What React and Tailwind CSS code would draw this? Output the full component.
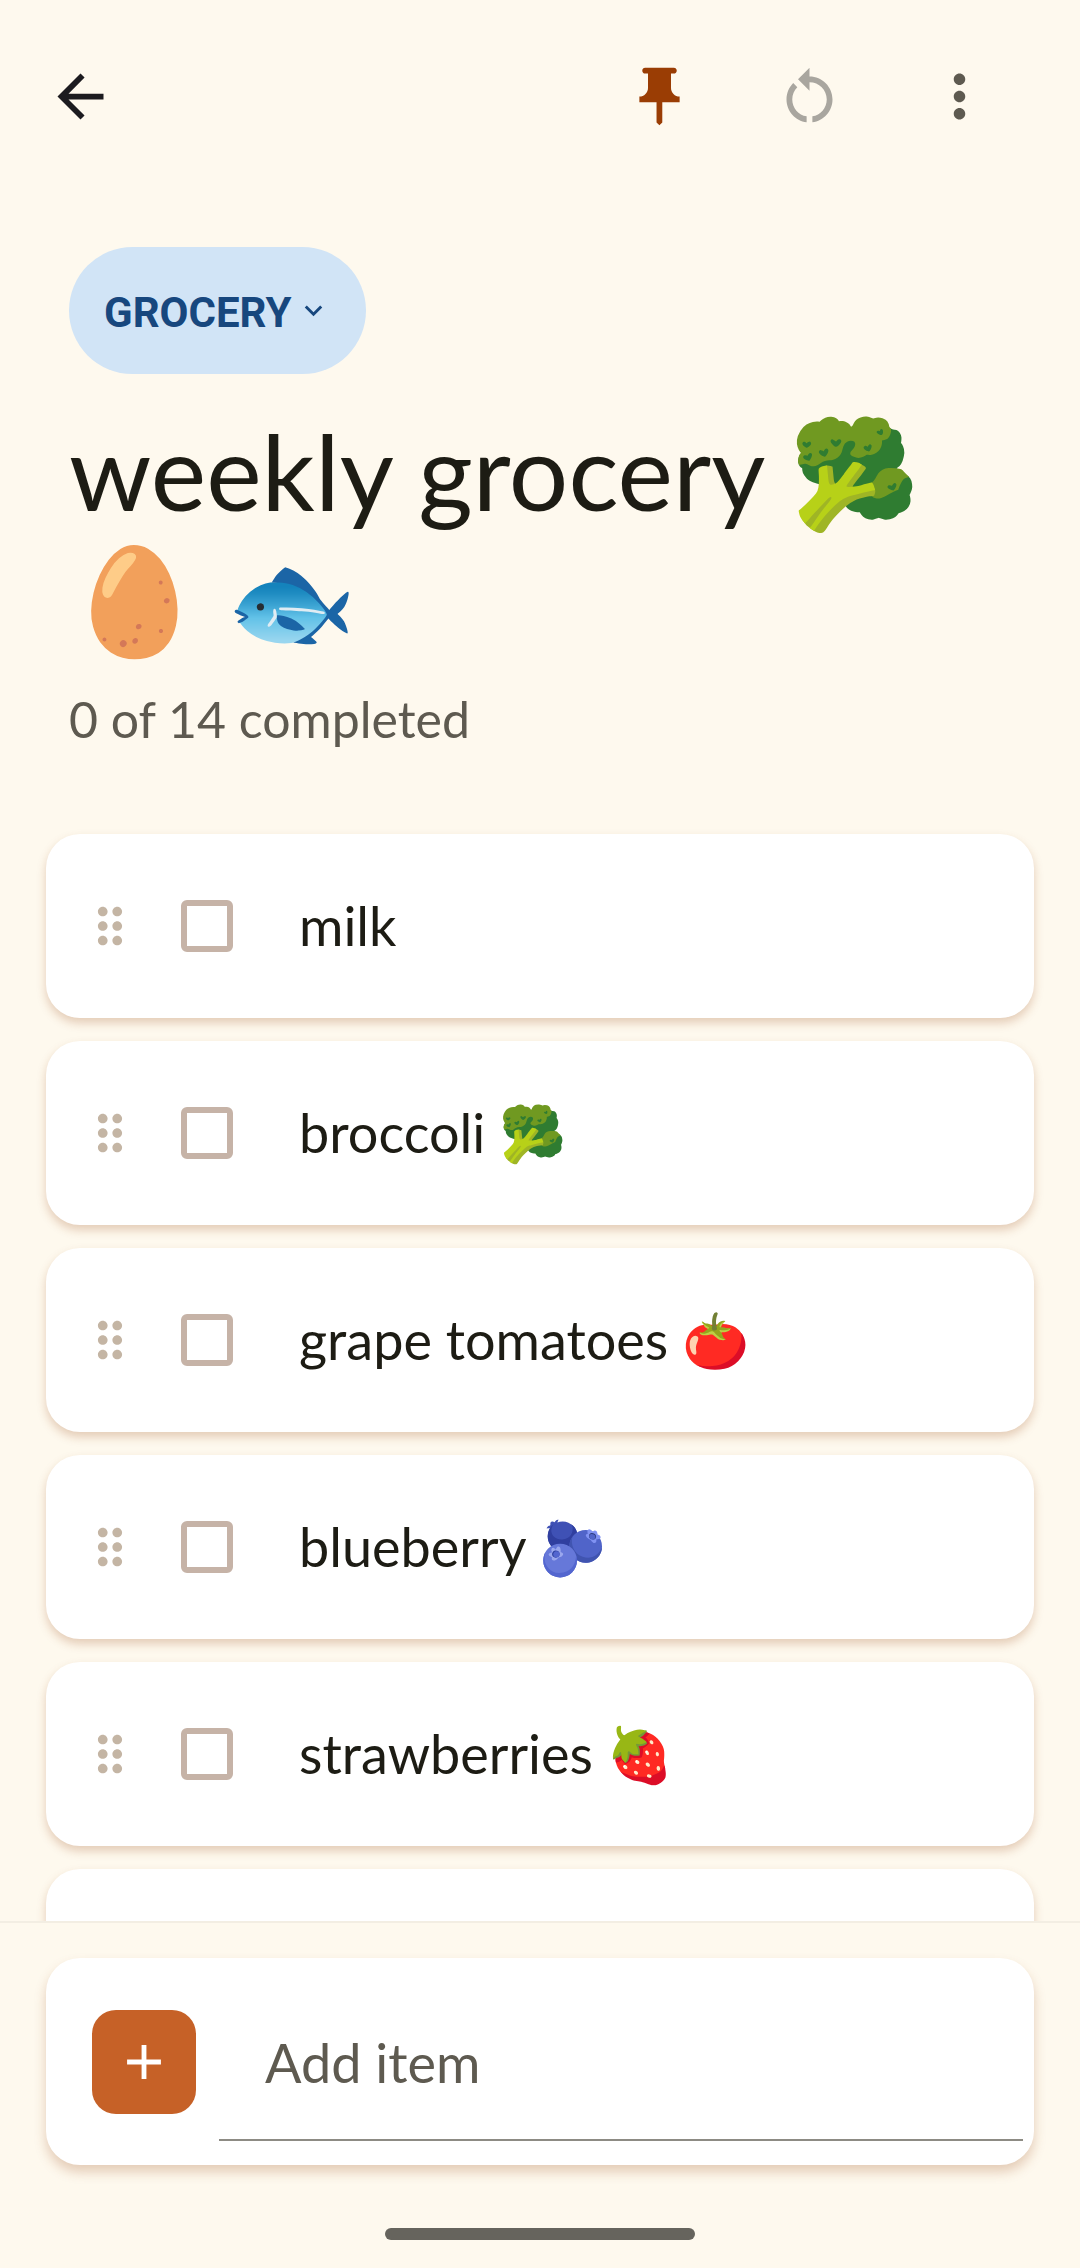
import { useState } from 'react';

const ITEMS = ['milk', 'broccoli 🥦', 'grape tomatoes 🍅', 'blueberry 🫐', 'strawberries 🍓', ''];

function Icon({ d, className }) {
  return (
    <svg viewBox="0 0 24 24" fill="currentColor" className={className} aria-hidden="true">
      <path d={d} />
    </svg>
  );
}

const BACK = 'M20 11H7.83l5.59-5.59L12 4l-8 8 8 8 1.41-1.41L7.83 13H20v-2z';
const PIN = 'M16 9V4h1c.55 0 1-.45 1-1s-.45-1-1-1H7c-.55 0-1 .45-1 1s.45 1 1 1h1v5c0 1.66-1.34 3-3 3v2h5.97v7l1 1 1-1v-7H19v-2c-1.66 0-3-1.34-3-3z';
const RESTART = 'M12 5V2L8 6l4 4V7c3.31 0 6 2.69 6 6 0 2.97-2.17 5.43-5 5.91v2.02c3.95-.49 7-3.85 7-7.93 0-4.42-3.58-8-8-8zM6 13c0-1.65.67-3.15 1.76-4.24L6.34 7.34C4.9 8.79 4 10.79 4 13c0 4.08 3.05 7.44 7 7.93v-2.02c-2.83-.48-5-2.94-5-5.91z';
const MORE = 'M12 8c1.1 0 2-.9 2-2s-.9-2-2-2-2 .9-2 2 .9 2 2 2zm0 2c-1.1 0-2 .9-2 2s.9 2 2 2 2-.9 2-2-.9-2-2-2zm0 6c-1.1 0-2 .9-2 2s.9 2 2 2 2-.9 2-2-.9-2-2-2z';
const CHEVRON = 'M7.41 8.59 12 13.17l4.59-4.58L18 10l-6 6-6-6z';
const DRAG = 'M11 18c0 1.1-.9 2-2 2s-2-.9-2-2 .9-2 2-2 2 .9 2 2zm-2-8c-1.1 0-2 .9-2 2s.9 2 2 2 2-.9 2-2-.9-2-2-2zm0-6c-1.1 0-2 .9-2 2s.9 2 2 2 2-.9 2-2-.9-2-2-2zm6 4c1.1 0 2-.9 2-2s-.9-2-2-2-2 .9-2 2 .9 2 2 2zm0 2c-1.1 0-2 .9-2 2s.9 2 2 2 2-.9 2-2-.9-2-2-2zm0 6c-1.1 0-2 .9-2 2s.9 2 2 2 2-.9 2-2-.9-2-2-2z';
const PLUS = 'M19 13h-6v6h-2v-6H5v-2h6V5h2v6h6v2z';

function ListItem({ name }) {
  const [done, setDone] = useState(false);

  return (
    <li className="flex h-[184px] shrink-0 items-center rounded-[34px] bg-white px-[35px] shadow-[0_5px_10px_rgba(150,70,20,0.25)]">
      <button aria-label="Reorder" className="text-[#c4b5a4]">
        <Icon d={DRAG} className="size-[58px]" />
      </button>
      <label className="ml-[42px] flex flex-1 items-center gap-[66px] text-[54px] leading-[62px]">
        <input
          type="checkbox"
          checked={done}
          onChange={() => setDone(!done)}
          className="size-[52px] appearance-none rounded-md border-[6px] border-[#c6b3a7] checked:bg-[#c6b3a7]"
        />
        <span>{name}</span>
      </label>
    </li>
  );
}

export default function App() {
  const [draft, setDraft] = useState('');

  return (
    <div className="flex h-screen flex-col bg-[#fef9ee] font-['Lato','Noto_Color_Emoji',sans-serif] text-[#1d1c14]">
      {/* Top bar */}
      <header className="flex shrink-0 items-center justify-between pt-[27px] pr-[52px] pl-[11px]">
        <button aria-label="Back" className="flex size-[138px] items-center justify-center text-[#1c1b1f]">
          <Icon d={BACK} className="size-[69px]" />
        </button>
        <div className="flex gap-3">
          <button aria-label="Unpin" className="flex size-[138px] items-center justify-center text-[#9a3d04]">
            <Icon d={PIN} className="size-[69px]" />
          </button>
          <button aria-label="Reset" className="flex size-[138px] items-center justify-center text-[#a9a69f]">
            <Icon d={RESTART} className="size-[69px]" />
          </button>
          <button aria-label="More" className="flex size-[138px] items-center justify-center text-[#5e5a50]">
            <Icon d={MORE} className="size-[69px]" />
          </button>
        </div>
      </header>

      <section className="shrink-0 px-[69px] pt-[82px]">
        <button className="flex h-[127px] items-center gap-1 rounded-full bg-[#d1e4f6] px-[35px] font-['Roboto',sans-serif] text-[42px] font-bold text-[#17477e]">
          <span className="pt-1">GROCERY</span>
          <Icon d={CHEVRON} className="size-[35px]" />
        </button>
        <h1 className="mt-[33px] text-[105px] leading-[127px]">weekly grocery 🥦🥚 🐟</h1>
        <p className="mt-[28px] text-[50px] leading-[60px] text-[#5e5a50]">0 of 14 completed</p>
      </section>

      <ul className="mt-[62px] flex min-h-0 flex-1 flex-col gap-[23px] overflow-hidden px-[46px] pt-[23px]">
        {ITEMS.map((name, i) => (
          <ListItem key={i} name={name} />
        ))}
      </ul>

      <footer className="shrink-0 border-t-2 border-[#f3eee3] px-[46px] pt-[35px]">
        <form
          onSubmit={(e) => e.preventDefault()}
          className="flex h-[207px] items-center rounded-[34px] bg-white pr-[11px] pl-[46px] shadow-[0_7px_12px_rgba(150,70,20,0.25)]"
        >
          <button aria-label="Add" className="flex size-[104px] items-center justify-center rounded-3xl bg-[#c66127] text-white">
            <Icon d={PLUS} className="size-[58px]" />
          </button>
          <input
            aria-label="Add item"
            placeholder="Add item"
            value={draft}
            onChange={(e) => setDraft(e.target.value)}
            className="ml-[23px] h-[158px] min-w-0 flex-1 border-b-2 border-[#8d8b84] px-[46px] pt-1 text-[54px] outline-none placeholder:text-[#5e5a50]"
          />
        </form>
        <div className="mx-auto mt-[63px] mb-7 h-3 w-[310px] rounded-full bg-[#66645d]" />
      </footer>
    </div>
  );
}
